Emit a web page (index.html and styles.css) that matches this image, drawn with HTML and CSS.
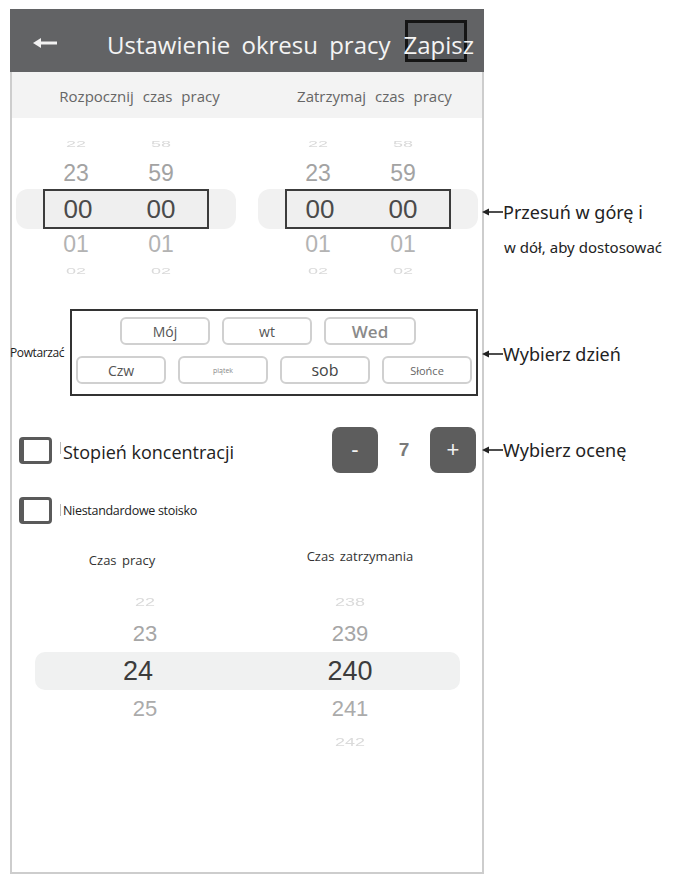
FILE: index.html
```html
<!DOCTYPE html>
<html lang="pl">
<head>
<meta charset="utf-8">
<title>Ustawienie okresu pracy</title>
<link rel="stylesheet" href="styles.css">
</head>
<body>
<div class="screen">
  <div class="phone">
    <header class="topbar">
      <svg class="back" width="24" height="12" viewBox="0 0 24 12"><line x1="5" y1="6" x2="24" y2="6" stroke="#f2f2f2" stroke-width="3"/><polygon points="0,6 8,1 8,11" fill="#f2f2f2"/></svg>
      <h1 class="title">Ustawienie okresu pracy</h1>
      <span class="save">Zapisz</span>
      <span class="save-mark"></span>
    </header>

    <div class="subhead">
      <span>Rozpocznij czas pracy</span>
      <span>Zatrzymaj czas pracy</span>
    </div>

    <div class="pickers">
      <div class="picker">
        <div class="cols far-top"><span>22</span><span>58</span></div>
        <div class="cols near-top"><span>23</span><span>59</span></div>
        <div class="band"><div class="box"><div class="cols sel"><span>00</span><span>00</span></div></div></div>
        <div class="cols near-bot"><span>01</span><span>01</span></div>
        <div class="cols far-bot"><span>02</span><span>02</span></div>
      </div>
      <div class="picker">
        <div class="cols far-top"><span>22</span><span>58</span></div>
        <div class="cols near-top"><span>23</span><span>59</span></div>
        <div class="band"><div class="box"><div class="cols sel"><span>00</span><span>00</span></div></div></div>
        <div class="cols near-bot"><span>01</span><span>01</span></div>
        <div class="cols far-bot"><span>02</span><span>02</span></div>
      </div>
    </div>

    <div class="repeat">
      <span class="repeat-label">Powtarzać</span>
      <div class="days">
        <div class="day-row first">
          <span class="day">Mój</span>
          <span class="day">wt</span>
          <span class="day wed">Wed</span>
        </div>
        <div class="day-row">
          <span class="day">Czw</span>
          <span class="day tiny">piątek</span>
          <span class="day big">sob</span>
          <span class="day small">Słońce</span>
        </div>
      </div>
    </div>

    <div class="option conc">
      <span class="check"></span>
      <span class="opt-text large">Stopień koncentracji</span>
      <div class="stepper">
        <span class="step">-</span>
        <span class="step-val">7</span>
        <span class="step">+</span>
      </div>
    </div>

    <div class="option custom">
      <span class="check"></span>
      <span class="opt-text small-text">Niestandardowe stoisko</span>
    </div>

    <div class="labels">
      <span class="lbl-work">Czas pracy</span>
      <span class="lbl-stop">Czas zatrzymania</span>
    </div>

    <div class="wheel">
      <div class="wcols w-far-top"><span>22</span><span>238</span></div>
      <div class="wcols w-near-top"><span>23</span><span>239</span></div>
      <div class="wcols w-sel"><span>24</span><span>240</span></div>
      <div class="wcols w-near-bot"><span>25</span><span>241</span></div>
      <div class="wcols w-far-bot"><span></span><span>242</span></div>
    </div>
  </div>

  <div class="note note-swipe"><svg class="arr" width="21" height="10" viewBox="0 0 21 10"><line x1="5" y1="5" x2="21" y2="5" stroke="#222" stroke-width="1.6"/><polygon points="0,5 7,1.5 7,8.5" fill="#222"/></svg>Przesuń w górę i</div>
  <div class="note note-swipe2">w dół, aby dostosować</div>
  <div class="note note-day"><svg class="arr" width="21" height="10" viewBox="0 0 21 10"><line x1="5" y1="5" x2="21" y2="5" stroke="#222" stroke-width="1.6"/><polygon points="0,5 7,1.5 7,8.5" fill="#222"/></svg>Wybierz dzień</div>
  <div class="note note-rate"><svg class="arr" width="21" height="10" viewBox="0 0 21 10"><line x1="5" y1="5" x2="21" y2="5" stroke="#222" stroke-width="1.6"/><polygon points="0,5 7,1.5 7,8.5" fill="#222"/></svg>Wybierz ocenę</div>
</div>
</body>
</html>
```

FILE: styles.css
```css
* { box-sizing: border-box; }

html, body {
  margin: 0;
  padding: 0;
  background: #ffffff;
}

body {
  font-family: "Open Sans", "Noto Sans", sans-serif;
  color: #222;
}

.screen {
  position: relative;
  width: 676px;
  height: 876px;
  overflow: hidden;
}

.phone {
  margin: 9px 0 0 10px;
  width: 474px;
  height: 865px;
  border: 2px solid #cdcdcd;
  border-top: none;
  display: flex;
  flex-direction: column;
}

/* header */
.topbar {
  position: relative;
  height: 63px;
  margin: 0 -2px;
  background: #626365;
  display: flex;
  align-items: center;
  padding-left: 23px;
}

.back {
  margin-top: 4px;
  flex: none;
}

.title {
  margin: 8px 0 0 50px;
  font-size: 24px;
  font-weight: 400;
  color: #f4f4f4;
  word-spacing: 5px;
  white-space: nowrap;
  position: relative;
  z-index: 1;
}

.save {
  margin: 8px 0 0 13px;
  font-size: 24px;
  color: #f4f4f4;
  position: relative;
  z-index: 1;
}

.save-mark {
  position: absolute;
  left: 395px;
  top: 11px;
  width: 62px;
  height: 42px;
  border: 3px solid #151515;
  background: #55575a;
}

/* sub header */
.subhead {
  height: 46px;
  background: #f3f3f3;
  display: grid;
  grid-template-columns: 255px 1fr;
  align-items: center;
  justify-items: center;
  font-size: 15px;
  color: #666;
  word-spacing: 5px;
  padding-top: 1px;
}

/* upper pickers */
.pickers {
  padding: 11px 4px 0;
  display: grid;
  grid-template-columns: 1fr 1fr;
  column-gap: 22px;
  font-family: "Liberation Sans", Arial, sans-serif;
}

.picker {
  display: flex;
  flex-direction: column;
}

.cols {
  width: 166px;
  margin: 0 auto;
  display: grid;
  grid-template-columns: 66px 66px;
  column-gap: 19px;
  justify-items: center;
  align-items: center;
}

.far-top, .far-bot {
  height: 28px;
  color: #dadada;
  font-size: 18px;
}
.far-top span, .far-bot span { transform: scaleY(0.55); filter: blur(0.4px); }
.far-bot { height: 22px; }

.near-top {
  height: 32px;
  font-size: 23px;
  color: #a3a3a3;
}

.near-bot {
  height: 30px;
  font-size: 23px;
  color: #b3b3b3;
}

.band {
  height: 40px;
  background: #f1f1f1;
  border-radius: 12px;
}

.box {
  width: 166px;
  height: 40px;
  margin: 0 auto;
  border: 2px solid #3c3c3c;
  background: #efefef;
  display: flex;
  align-items: center;
}

.box .cols {
  width: 162px;
  grid-template-columns: 64px 64px;
  column-gap: 19px;
  padding-left: 1px;
}

.sel {
  font-size: 26px;
  color: #4a4a4a;
}

/* repeat */
.repeat {
  margin-top: 28px;
  display: flex;
  align-items: center;
}

.repeat-label {
  margin-left: -2px;
  width: 60px;
  font-size: 12px;
  color: #222;
  letter-spacing: -0.4px;
}

.days {
  width: 408px;
  height: 87px;
  border: 2px solid #333;
  padding: 6px 0 10px;
  display: flex;
  flex-direction: column;
  gap: 11px;
}

.day-row {
  display: flex;
  justify-content: center;
  gap: 12px;
}

.day-row.first {
  justify-content: flex-start;
  padding-left: 48px;
}

.day {
  width: 90px;
  height: 28px;
  border: 2px solid #d0d0d0;
  border-radius: 6px;
  display: flex;
  align-items: center;
  justify-content: center;
  font-size: 14px;
  color: #555;
}

.day.wed {
  font-size: 17px;
  font-weight: 600;
  color: #8a8a8a;
  width: 92px;
}

.day.tiny { font-size: 7px; color: #888; }
.day.small { font-size: 11px; color: #666; }
.day.big { font-size: 16px; color: #444; }

/* options */
.option {
  display: flex;
  align-items: center;
}

.conc {
  margin-top: 31px;
  height: 46px;
}

.custom {
  margin-top: 22px;
  height: 30px;
}

.check {
  flex: none;
  margin-left: 7px;
  width: 33px;
  height: 27px;
  border: 3px solid #5a5a5a;
  border-left-width: 5px;
  border-radius: 4px;
  background: #fff;
}

.opt-text {
  margin-left: 11px;
  position: relative;
}

.opt-text::before {
  content: "";
  position: absolute;
  left: -3px;
  top: 2px;
  width: 1px;
  height: 12px;
  background: #bbb;
}

.large {
  font-size: 18px;
  color: #222;
  margin-top: 4px;
}

.small-text {
  font-size: 12.5px;
  color: #222;
  letter-spacing: -0.3px;
}

.stepper {
  margin-left: auto;
  margin-right: 6px;
  display: flex;
  align-items: center;
}

.step {
  width: 46px;
  height: 46px;
  border-radius: 8px;
  background: #5d5d5d;
  color: #f2f2f2;
  display: flex;
  align-items: center;
  justify-content: center;
  font-size: 22px;
  font-family: "Liberation Sans", Arial, sans-serif;
}

.step-val {
  width: 52px;
  text-align: center;
  font-size: 19px;
  font-weight: 700;
  color: #7a7a7a;
  font-family: "Liberation Sans", Arial, sans-serif;
}

/* lower labels */
.labels {
  margin-top: 22px;
  height: 18px;
  display: grid;
  grid-template-columns: 220px 1fr;
  justify-items: center;
  align-items: center;
  color: #333;
}

.lbl-work {
  font-size: 13px;
  word-spacing: 2px;
  margin-top: 4px;
}

.lbl-stop {
  font-size: 13px;
  word-spacing: 2px;
  margin-top: -4px;
  margin-left: 6px;
}

/* lower wheel */
.wheel {
  margin-top: 23px;
  font-family: "Liberation Sans", Arial, sans-serif;
}

.wcols {
  width: 425px;
  margin-left: 23px;
  display: grid;
  grid-template-columns: 220px 190px;
  justify-items: center;
  align-items: center;
}

.w-far-top, .w-far-bot {
  height: 28px;
  font-size: 18px;
  color: #dadada;
}
.w-far-top span, .w-far-bot span { transform: scaleY(0.6); filter: blur(0.4px); }

.w-near-top {
  height: 36px;
  font-size: 22px;
  color: #a6a6a6;
}

.w-near-bot {
  height: 38px;
  font-size: 22px;
  color: #ababab;
}

.w-sel {
  height: 38px;
  background: #f0f1f1;
  border-radius: 10px;
  font-size: 27px;
  color: #3c3c3c;
}
.w-sel span:first-child { margin-right: 14px; }

/* annotations */
.note {
  position: absolute;
  display: flex;
  align-items: center;
  white-space: nowrap;
  color: #222;
  font-family: "Noto Sans", "Open Sans", sans-serif;
  font-size: 18px;
  line-height: 20px;
}

.arr { flex: none; margin-right: 0; }

.note-swipe { left: 482px; top: 202px; }
.note-swipe2 { left: 504px; top: 237px; font-size: 15px; }
.note-day { left: 482px; top: 344px; }
.note-rate { left: 482px; top: 440px; }
```
